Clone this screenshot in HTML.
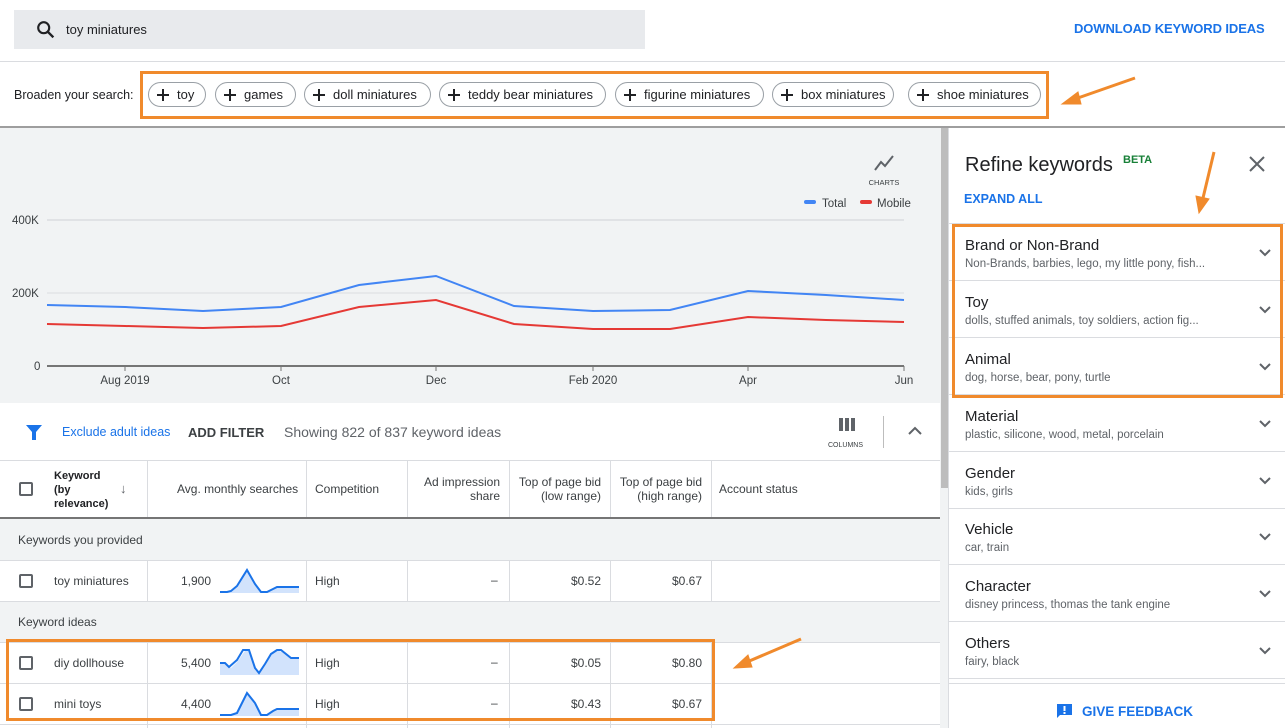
<!DOCTYPE html>
<html><head><meta charset="utf-8"><style>
*{margin:0;padding:0;box-sizing:border-box}
body{width:1285px;height:728px;overflow:hidden;background:#fff;font-family:"Liberation Sans",Arial,sans-serif;color:#202124;position:relative}
.a{position:absolute;white-space:nowrap}
.chip{position:absolute;top:82px;height:25px;border:1px solid #9aa0a6;border-radius:13px;font-size:13px;line-height:23px;padding-left:28px;color:#202124}
.chip:before{content:"";position:absolute;left:8px;top:11px;width:12px;height:1.6px;background:#202124}
.chip:after{content:"";position:absolute;left:13.2px;top:5.8px;width:1.6px;height:12px;background:#202124}
.hl{position:absolute;background:#dadce0;height:1px}
.vl{position:absolute;background:#dadce0;width:1px}
.t{font-size:12px;color:#3c4043}
.ri{position:absolute;left:949px;width:336px;height:57px;border-bottom:1px solid #dadce0}
.ri b{position:absolute;left:16px;top:13px;font-weight:normal;font-size:15px;color:#202124}
.ri i{position:absolute;left:16px;top:34px;font-style:normal;font-size:11.5px;color:#5f6368}
.ri svg{position:absolute;right:13px;top:24px}
.cb{position:absolute;width:14px;height:14px;border:2px solid #5f6368;border-radius:2px}
.ob{position:absolute;border:3px solid #f08a2c}
</style></head><body>
<!-- top -->
<div class="a" style="left:14px;top:10px;width:631px;height:39px;background:#e8eaed"></div>
<svg class="a" style="left:35px;top:19px" width="22" height="22" viewBox="0 0 24 24"><circle cx="9.5" cy="9.5" r="6" fill="none" stroke="#202124" stroke-width="2.3"/><path d="M14 14l6 6" stroke="#202124" stroke-width="2.6"/></svg>
<div class="a" style="left:66px;top:22px;font-size:13px">toy miniatures</div>
<div class="a" style="left:1074px;top:21px;font-size:13px;font-weight:bold;color:#1a73e8;letter-spacing:-0.1px">DOWNLOAD KEYWORD IDEAS</div>
<div class="hl" style="left:0;top:61px;width:1285px"></div>
<div class="a" style="left:14px;top:88px;font-size:12.5px">Broaden your search:</div>
<div class="chip" style="left:148px;width:58px">toy</div>
<div class="chip" style="left:215px;width:81px">games</div>
<div class="chip" style="left:304px;width:127px">doll miniatures</div>
<div class="chip" style="left:439px;width:167px">teddy bear miniatures</div>
<div class="chip" style="left:615px;width:149px">figurine miniatures</div>
<div class="chip" style="left:772px;width:122px">box miniatures</div>
<div class="chip" style="left:908px;width:133px">shoe miniatures</div>
<div class="a" style="left:0;top:126px;width:1285px;height:2px;background:#9e9e9e"></div>
<!-- chart -->
<div class="a" style="left:0;top:128px;width:940px;height:275px;background:#f1f3f4"></div>
<div class="a" style="left:940px;top:128px;width:9px;height:600px;background:#f1f3f4"></div>
<div class="a" style="left:941px;top:128px;width:7px;height:360px;background:#bdbdbd"></div>
<svg class="a" style="left:0;top:128px" width="940" height="275">
<g transform="translate(0,-128)">
<line x1="47" y1="220" x2="904" y2="220" stroke="#dadce0" stroke-width="1.5"/>
<line x1="47" y1="293" x2="904" y2="293" stroke="#dadce0" stroke-width="1"/>
<line x1="47" y1="366" x2="904" y2="366" stroke="#757575" stroke-width="2"/>
<g stroke="#757575"><line x1="125" y1="366" x2="125" y2="371"/><line x1="281" y1="366" x2="281" y2="371"/><line x1="436" y1="366" x2="436" y2="371"/><line x1="593" y1="366" x2="593" y2="371"/><line x1="748" y1="366" x2="748" y2="371"/><line x1="904" y1="366" x2="904" y2="371"/></g>
<polyline fill="none" stroke="#4285f4" stroke-width="2" points="47,305 125,307 203,311 281,307 359,285 436,276 514,306 593,311 670,310 748,291 826,295 904,300"/>
<polyline fill="none" stroke="#e53935" stroke-width="2" points="47,324 125,326 203,328 281,326 359,307 436,300 514,324 593,329 670,329 748,317 826,320 904,322"/>
<g font-family="Liberation Sans" font-size="11.5" fill="#3c4043">
<text x="12" y="224">400K</text><text x="12" y="297">200K</text><text x="34" y="370">0</text>
<text x="125" y="384" text-anchor="middle">Aug 2019</text><text x="281" y="384" text-anchor="middle">Oct</text><text x="436" y="384" text-anchor="middle">Dec</text><text x="593" y="384" text-anchor="middle">Feb 2020</text><text x="748" y="384" text-anchor="middle">Apr</text><text x="904" y="384" text-anchor="middle">Jun</text>
<text x="822" y="207">Total</text><text x="877" y="207">Mobile</text>
<text x="884" y="185" font-size="7.5" text-anchor="middle">CHARTS</text>
</g>
<rect x="804" y="200" width="12" height="4" rx="2" fill="#4285f4"/><rect x="860" y="200" width="12" height="4" rx="2" fill="#e53935"/>
<polyline points="875,170 881,162 885,166 893,156" fill="none" stroke="#5f6368" stroke-width="2"/>
</g></svg>
<!-- filter row -->
<svg class="a" style="left:25px;top:424px" width="18" height="17" viewBox="0 0 18 17"><path d="M1 1h16l-6 7v8h-4v-8z" fill="#1a73e8"/></svg>
<div class="a" style="left:62px;top:425px;font-size:12.5px;color:#1a73e8">Exclude adult ideas</div>
<div class="a" style="left:188px;top:425px;font-size:13px;font-weight:bold;color:#3c4043">ADD FILTER</div>
<div class="a" style="left:284px;top:424px;font-size:14px;color:#5f6368">Showing 822 of 837 keyword ideas</div>
<svg class="a" style="left:839px;top:418px" width="18" height="14"><g fill="#5f6368"><rect x="0" y="0" width="4" height="13"/><rect x="6" y="0" width="4" height="13"/><rect x="12" y="0" width="4" height="13"/></g></svg>
<div class="a" style="left:828px;top:442px;font-size:7px;color:#3c4043">COLUMNS</div>
<div class="vl" style="left:883px;top:416px;height:32px;background:#bdbdbd"></div>
<svg class="a" style="left:907px;top:425px" width="16" height="12"><path d="M2 9l6-6 6 6" fill="none" stroke="#5f6368" stroke-width="2"/></svg>
<!-- table -->
<div class="hl" style="left:0;top:460px;width:940px"></div>
<div class="a" style="left:0;top:517px;width:940px;height:2px;background:#757575"></div>
<div class="a" style="left:0;top:519px;width:940px;height:41px;background:#f1f3f4"></div>
<div class="a" style="left:0;top:602px;width:940px;height:40px;background:#f1f3f4"></div>
<div class="hl" style="left:0;top:560px;width:940px"></div>
<div class="hl" style="left:0;top:601px;width:940px"></div>
<div class="hl" style="left:0;top:642px;width:940px"></div>
<div class="hl" style="left:0;top:683px;width:940px"></div>
<div class="hl" style="left:0;top:724px;width:940px"></div>
<div class="vl" style="left:147px;top:461px;height:56px"></div><div class="vl" style="left:306px;top:461px;height:56px"></div><div class="vl" style="left:407px;top:461px;height:56px"></div><div class="vl" style="left:509px;top:461px;height:56px"></div><div class="vl" style="left:610px;top:461px;height:56px"></div><div class="vl" style="left:711px;top:461px;height:56px"></div>
<div class="vl" style="left:147px;top:561px;height:40px"></div><div class="vl" style="left:306px;top:561px;height:40px"></div><div class="vl" style="left:407px;top:561px;height:40px"></div><div class="vl" style="left:509px;top:561px;height:40px"></div><div class="vl" style="left:610px;top:561px;height:40px"></div><div class="vl" style="left:711px;top:561px;height:40px"></div>
<div class="vl" style="left:147px;top:643px;height:85px"></div><div class="vl" style="left:306px;top:643px;height:85px"></div><div class="vl" style="left:407px;top:643px;height:85px"></div><div class="vl" style="left:509px;top:643px;height:85px"></div><div class="vl" style="left:610px;top:643px;height:85px"></div><div class="vl" style="left:711px;top:643px;height:85px"></div>
<div class="cb" style="left:19px;top:482px"></div>
<div class="a t" style="left:54px;top:469px;font-weight:bold;font-size:11px;line-height:14px;color:#202124">Keyword<br>(by<br>relevance)</div>
<div class="a" style="left:120px;top:481px;font-size:13px;color:#5f6368">↓</div>
<div class="a t" style="left:177px;top:482px">Avg. monthly searches</div>
<div class="a t" style="left:315px;top:482px">Competition</div>
<div class="a t" style="left:400px;top:475px;width:100px;text-align:right;line-height:14px">Ad impression<br>share</div>
<div class="a t" style="left:500px;top:475px;width:101px;text-align:right;line-height:14px">Top of page bid<br>(low range)</div>
<div class="a t" style="left:600px;top:475px;width:102px;text-align:right;line-height:14px">Top of page bid<br>(high range)</div>
<div class="a t" style="left:719px;top:482px">Account status</div>
<div class="a t" style="left:18px;top:533px">Keywords you provided</div>
<div class="a t" style="left:18px;top:615px">Keyword ideas</div>
<!-- rows -->
<div class="cb" style="left:19px;top:574px"></div>
<div class="a t" style="left:54px;top:574px">toy miniatures</div>
<div class="a t" style="left:150px;top:574px;width:61px;text-align:right">1,900</div>
<div class="a t" style="left:315px;top:574px">High</div><div class="a t" style="left:491px;top:573px">–</div>
<div class="a t" style="left:500px;top:574px;width:101px;text-align:right">$0.52</div><div class="a t" style="left:600px;top:574px;width:102px;text-align:right">$0.67</div>
<div class="cb" style="left:19px;top:656px"></div>
<div class="a t" style="left:54px;top:656px">diy dollhouse</div>
<div class="a t" style="left:150px;top:656px;width:61px;text-align:right">5,400</div>
<div class="a t" style="left:315px;top:656px">High</div><div class="a t" style="left:491px;top:655px">–</div>
<div class="a t" style="left:500px;top:656px;width:101px;text-align:right">$0.05</div><div class="a t" style="left:600px;top:656px;width:102px;text-align:right">$0.80</div>
<div class="cb" style="left:19px;top:697px"></div>
<div class="a t" style="left:54px;top:697px">mini toys</div>
<div class="a t" style="left:150px;top:697px;width:61px;text-align:right">4,400</div>
<div class="a t" style="left:315px;top:697px">High</div><div class="a t" style="left:491px;top:696px">–</div>
<div class="a t" style="left:500px;top:697px;width:101px;text-align:right">$0.43</div><div class="a t" style="left:600px;top:697px;width:102px;text-align:right">$0.67</div>
<svg class="a" style="left:219px;top:566px" width="82" height="28"><path d="M1 26H8L12 25L18 20L28 4L36 18L42 26H48L52 24L58 21H80V27H1Z" fill="#d2e3fc"/><polyline points="1,26 8,26 12,25 18,20 28,4 36,18 42,26 48,26 52,24 58,21 80,21" fill="none" stroke="#1a73e8" stroke-width="2"/></svg>
<svg class="a" style="left:219px;top:648px" width="82" height="28"><path d="M1 15L8 16L12 20L18 14L26 3L30 3L36 22L40 26L46 18L52 8L56 3L60 3L68 6L74 11L80 10V27H1Z" fill="#d2e3fc"/><polyline points="1,15 6,15 10,19 18,12 24,2 30,2 36,20 40,25 46,16 52,6 58,2 62,2 72,10 80,10" fill="none" stroke="#1a73e8" stroke-width="2"/></svg>
<svg class="a" style="left:219px;top:689px" width="82" height="28"><path d="M1 26H12L18 24L28 4L36 14L42 26H48L54 22L58 20H80V27H1Z" fill="#d2e3fc"/><polyline points="1,26 12,26 18,24 28,4 36,14 42,26 48,26 54,22 58,20 80,20" fill="none" stroke="#1a73e8" stroke-width="2"/></svg>
<!-- right panel -->
<div class="vl" style="left:948px;top:128px;height:600px;background:#dadce0"></div>
<div class="a" style="left:965px;top:154px;font-size:20px;color:#202124">Refine keywords</div>
<div class="a" style="left:1123px;top:154px;font-size:11px;font-weight:bold;color:#188038">BETA</div>
<svg class="a" style="left:1248px;top:155px" width="18" height="18"><path d="M2 2L16 16M16 2L2 16" stroke="#5f6368" stroke-width="2"/></svg>
<div class="a" style="left:964px;top:192px;font-size:12.5px;font-weight:bold;color:#1a73e8">EXPAND ALL</div>
<div class="hl" style="left:949px;top:223px;width:336px"></div>
<div class="ri" style="top:224px"><b>Brand or Non-Brand</b><i>Non-Brands, barbies, lego, my little pony, fish...</i><svg width="14" height="10"><path d="M2 2l5 5 5-5" fill="none" stroke="#5f6368" stroke-width="2"/></svg></div>
<div class="ri" style="top:281px"><b>Toy</b><i>dolls, stuffed animals, toy soldiers, action fig...</i><svg width="14" height="10"><path d="M2 2l5 5 5-5" fill="none" stroke="#5f6368" stroke-width="2"/></svg></div>
<div class="ri" style="top:338px"><b>Animal</b><i>dog, horse, bear, pony, turtle</i><svg width="14" height="10"><path d="M2 2l5 5 5-5" fill="none" stroke="#5f6368" stroke-width="2"/></svg></div>
<div class="ri" style="top:395px"><b>Material</b><i>plastic, silicone, wood, metal, porcelain</i><svg width="14" height="10"><path d="M2 2l5 5 5-5" fill="none" stroke="#5f6368" stroke-width="2"/></svg></div>
<div class="ri" style="top:452px"><b>Gender</b><i>kids, girls</i><svg width="14" height="10"><path d="M2 2l5 5 5-5" fill="none" stroke="#5f6368" stroke-width="2"/></svg></div>
<div class="ri" style="top:508px"><b>Vehicle</b><i>car, train</i><svg width="14" height="10"><path d="M2 2l5 5 5-5" fill="none" stroke="#5f6368" stroke-width="2"/></svg></div>
<div class="ri" style="top:565px"><b>Character</b><i>disney princess, thomas the tank engine</i><svg width="14" height="10"><path d="M2 2l5 5 5-5" fill="none" stroke="#5f6368" stroke-width="2"/></svg></div>
<div class="ri" style="top:622px"><b>Others</b><i>fairy, black</i><svg width="14" height="10"><path d="M2 2l5 5 5-5" fill="none" stroke="#5f6368" stroke-width="2"/></svg></div>
<div class="hl" style="left:949px;top:683px;width:336px"></div>
<svg class="a" style="left:1056px;top:703px" width="17" height="17" viewBox="0 0 17 17"><path d="M1 1h15v11H4l-3 3z" fill="#1a73e8"/><rect x="7.5" y="3" width="2" height="5" fill="#fff"/><rect x="7.5" y="9" width="2" height="2" fill="#fff"/></svg>
<div class="a" style="left:1082px;top:704px;font-size:13.5px;font-weight:bold;color:#1a73e8">GIVE FEEDBACK</div>
<!-- orange annotations -->
<div class="ob" style="left:140px;top:71px;width:909px;height:48px"></div>
<div class="ob" style="left:952px;top:224px;width:331px;height:174px"></div>
<div class="ob" style="left:6px;top:639px;width:709px;height:82px"></div>
<svg class="a" style="left:0;top:0" width="1285" height="728">
<g stroke="#f08a2c" stroke-width="3" fill="#f08a2c">
<line x1="1135" y1="78" x2="1075" y2="99"/><path d="M1062 104L1078 92L1081 104Z" stroke-width="1"/>
<line x1="1214" y1="152" x2="1203" y2="198"/><path d="M1199 213L1196 196L1209 199Z" stroke-width="1"/>
<line x1="801" y1="639" x2="747" y2="662"/><path d="M734 668L748 655L752 667Z" stroke-width="1"/>
</g></svg>
</body></html>
